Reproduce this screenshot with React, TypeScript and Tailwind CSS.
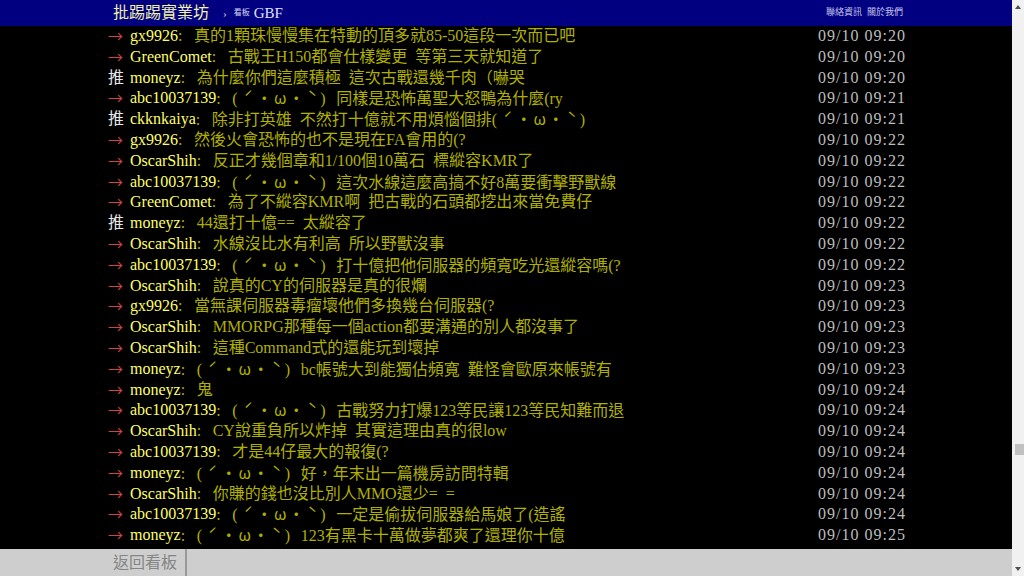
import React from "react";

type Push = { tag: "→" | "推"; user: string; text: string; time: string };

const KAO = "(ˊ・ω・ˋ)";

const pushes: Push[] = [
  { tag: "→", user: "gx9926", text: "真的1顆珠慢慢集在特動的頂多就85-50這段一次而已吧", time: "09/10 09:20" },
  { tag: "→", user: "GreenComet", text: "古戰王H150都會仕樣變更 等第三天就知道了", time: "09/10 09:20" },
  { tag: "推", user: "moneyz", text: "為什麼你們這麼積極 這次古戰還幾千肉（嚇哭", time: "09/10 09:20" },
  { tag: "→", user: "abc10037139", text: "(ˊ・ω・ˋ) 同樣是恐怖萬聖大怒鴨為什麼(ry", time: "09/10 09:21" },
  { tag: "推", user: "ckknkaiya", text: "除非打英雄 不然打十億就不用煩惱個排(ˊ・ω・ˋ)", time: "09/10 09:21" },
  { tag: "→", user: "gx9926", text: "然後火會恐怖的也不是現在FA會用的(?", time: "09/10 09:22" },
  { tag: "→", user: "OscarShih", text: "反正才幾個章和1/100個10萬石 標縱容KMR了", time: "09/10 09:22" },
  { tag: "→", user: "abc10037139", text: "(ˊ・ω・ˋ) 這次水線這麼高搞不好8萬要衝擊野獸線", time: "09/10 09:22" },
  { tag: "→", user: "GreenComet", text: "為了不縱容KMR啊 把古戰的石頭都挖出來當免費仔", time: "09/10 09:22" },
  { tag: "推", user: "moneyz", text: "44還打十億== 太縱容了", time: "09/10 09:22" },
  { tag: "→", user: "OscarShih", text: "水線沒比水有利高 所以野獸沒事", time: "09/10 09:22" },
  { tag: "→", user: "abc10037139", text: "(ˊ・ω・ˋ) 打十億把他伺服器的頻寬吃光還縱容嗎(?", time: "09/10 09:22" },
  { tag: "→", user: "OscarShih", text: "說真的CY的伺服器是真的很爛", time: "09/10 09:23" },
  { tag: "→", user: "gx9926", text: "當無課伺服器毒瘤壞他們多換幾台伺服器(?", time: "09/10 09:23" },
  { tag: "→", user: "OscarShih", text: "MMORPG那種每一個action都要溝通的別人都沒事了", time: "09/10 09:23" },
  { tag: "→", user: "OscarShih", text: "這種Command式的還能玩到壞掉", time: "09/10 09:23" },
  { tag: "→", user: "moneyz", text: "(ˊ・ω・ˋ) bc帳號大到能獨佔頻寬 難怪會歐原來帳號有", time: "09/10 09:23" },
  { tag: "→", user: "moneyz", text: "鬼", time: "09/10 09:24" },
  { tag: "→", user: "abc10037139", text: "(ˊ・ω・ˋ) 古戰努力打爆123等民讓123等民知難而退", time: "09/10 09:24" },
  { tag: "→", user: "OscarShih", text: "CY說重負所以炸掉 其實這理由真的很low", time: "09/10 09:24" },
  { tag: "→", user: "abc10037139", text: "才是44仔最大的報復(?", time: "09/10 09:24" },
  { tag: "→", user: "moneyz", text: "(ˊ・ω・ˋ) 好，年末出一篇機房訪問特輯", time: "09/10 09:24" },
  { tag: "→", user: "OscarShih", text: "你賺的錢也沒比別人MMO還少= =", time: "09/10 09:24" },
  { tag: "→", user: "abc10037139", text: "(ˊ・ω・ˋ) 一定是偷拔伺服器給馬娘了(造謠", time: "09/10 09:24" },
  { tag: "→", user: "moneyz", text: "(ˊ・ω・ˋ) 123有黑卡十萬做夢都爽了還理你十億", time: "09/10 09:25" },
];

// kaomoji: full-width cells like the BBS font draws them
function Kaomoji() {
  const cell = "inline-block w-[16px] text-center font-['Noto_Sans_CJK_TC',sans-serif]";
  return (
    <span>
      <span className="inline-block w-[8px]">(</span>
      <span className={cell}>ˊ</span>
      <span className={cell}>・</span>
      <span className={cell}>ω</span>
      <span className={cell}>・</span>
      <span className={cell}>ˋ</span>
      <span className="inline-block w-[8px]">)</span>
    </span>
  );
}

function PushText({ text }: { text: string }) {
  const parts = text.split(KAO);
  return (
    <>
      {parts.map((part, i) => (
        <React.Fragment key={i}>
          {i > 0 && <Kaomoji />}
          {part}
        </React.Fragment>
      ))}
    </>
  );
}

function PushRow({ p }: { p: Push }) {
  return (
    <div className="flex h-[20.8px] items-center whitespace-nowrap pl-[2px] text-[16px] leading-[20.8px] [word-spacing:4px]">
      {p.tag === "推" ? (
        <span className="w-[22px] text-[#e8e8e8]">推</span>
      ) : (
        <span className="w-[22px] font-['Noto_Sans_CJK_TC',sans-serif] text-[15px] text-[#d04444]">→</span>
      )}
      <span className="text-[#ffff66]">{p.user}</span>
      <span className="flex-1 text-[#b0b000]">
        <span className="inline-block w-[8px]">:</span> <PushText text={p.text} />
      </span>
      <span className="tracking-[1px] text-[#bdbdbd] [word-spacing:0px]">{p.time}</span>
    </div>
  );
}

export default function App() {
  return (
    <div className="flex h-[576px] w-[1024px] overflow-hidden bg-black font-['Liberation_Serif','Noto_Sans_CJK_TC',serif]">
      <div className="flex min-w-0 flex-1 flex-col">
        {/* Top bar */}
        <div className="h-[26px] shrink-0 bg-[#000080]">
          <div className="mx-auto flex h-full w-[800px] items-center pl-[7px] pr-[3px]">
            <span className="text-[16px] text-[#f0f0a8]">批踢踢實業坊</span>
            <span className="ml-[14px] text-[11px] text-[#c8c8e0]">›</span>
            <span className="ml-[7px] text-[8px] text-[#d8d8f0]">看板</span>
            <span className="ml-[4px] text-[15px] text-[#e0e0ff]">GBF</span>
            <div className="ml-auto flex gap-[5px] text-[9px] text-[#c8c8ec]">
              <span>聯絡資訊</span>
              <span>關於我們</span>
            </div>
          </div>
        </div>

        {/* Pushes */}
        <div className="min-h-0 flex-1 overflow-hidden">
          <div className="mx-auto w-[800px]">
            {pushes.map((p, i) => (
              <PushRow key={i} p={p} />
            ))}
          </div>
        </div>

        {/* Bottom bar */}
        <div className="h-[27px] shrink-0 bg-[#cecece]">
          <div className="mx-auto flex h-full w-[800px]">
            <div className="flex items-center border-r-2 border-[#9a9a9a] pl-[7px] pr-[8px] text-[16px] text-[#858585]">
              返回看板
            </div>
          </div>
        </div>
      </div>

      {/* Scrollbar */}
      <div className="flex w-[12px] shrink-0 flex-col items-center bg-[#f1f1f1]">
        <div className="mt-[5px] h-0 w-0 border-x-[3px] border-b-[4px] border-x-transparent border-b-[#505050]" />
        <div className="flex-1" />
        <div className="mb-[112px] ml-[2px] h-[11px] w-[9px] bg-[#c1c1c1]" />
        <div className="mb-[5px] h-0 w-0 border-x-[3px] border-t-[4px] border-x-transparent border-t-[#505050]" />
      </div>
    </div>
  );
}
